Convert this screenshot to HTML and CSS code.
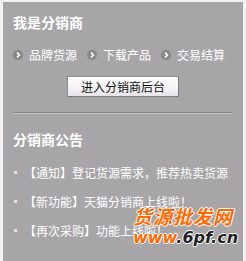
FILE: index.html
```html
<!DOCTYPE html>
<html>
<head>
<meta charset="utf-8">
<link rel="stylesheet" href="styles.css">
</head>
<body>
<div class="panel">
  <h2 class="title">我是分销商</h2>
  <div class="links">
    <a class="link"><span class="ico"><svg width="10" height="10" viewBox="0 0 10 10"><circle cx="5" cy="5" r="5" fill="#89878a"/><path d="M4 2.6 L6.4 5 L4 7.4" stroke="#fff" stroke-width="1.6" fill="none"/></svg></span>品牌货源</a>
    <a class="link"><span class="ico"><svg width="10" height="10" viewBox="0 0 10 10"><circle cx="5" cy="5" r="5" fill="#89878a"/><path d="M4 2.6 L6.4 5 L4 7.4" stroke="#fff" stroke-width="1.6" fill="none"/></svg></span>下载产品</a>
    <a class="link"><span class="ico"><svg width="10" height="10" viewBox="0 0 10 10"><circle cx="5" cy="5" r="5" fill="#89878a"/><path d="M4 2.6 L6.4 5 L4 7.4" stroke="#fff" stroke-width="1.6" fill="none"/></svg></span>交易结算</a>
  </div>
  <div class="btnrow"><button class="btn">进入分销商后台</button></div>
  <div class="divider"></div>
  <h2 class="title title2">分销商公告</h2>
  <ul class="news">
    <li>【通知】登记货源需求，推荐热卖货源</li>
    <li>【新功能】天猫分销商上线啦！</li>
    <li>【再次采购】功能上线啦！</li>
  </ul>
  <div class="mark">
    <div class="mark-cn">货源批发网</div>
    <div class="mark-en"><span class="w">www</span>.6pf.cn</div>
  </div>
</div>
</body>
</html>
```
FILE: styles.css
```css
html, body {
  margin: 0;
  padding: 0;
  background: #f3f1f4;
}
body {
  font-family: "Noto Sans CJK SC", "Liberation Sans", sans-serif;
  font-size: 12px;
  color: #fff;
}
.panel {
  position: relative;
  margin: 2px 0 0 3px;
  width: 240px;
  height: 259px;
  background: #a7a5a8;
  padding: 10px 10px 0 10px;
  box-sizing: border-box;
  overflow: hidden;
}
.title {
  margin: 0;
  font-size: 14px;
  line-height: 20px;
  font-weight: bold;
  color: #fff;
}
.links {
  margin-top: 15px;
  display: flex;
  gap: 10px;
  line-height: 16px;
}
.link {
  display: flex;
  align-items: center;
  gap: 6px;
  color: #fff;
  white-space: nowrap;
}
.ico {
  display: flex;
  width: 10px;
  height: 10px;
  margin-top: -1px;
}
.btnrow {
  margin-top: 13px;
  display: flex;
  justify-content: center;
}
.btn {
  width: 112px;
  height: 21px;
  padding: 0;
  font-family: inherit;
  font-size: 12px;
  line-height: 19px;
  color: #111;
  background: linear-gradient(#ffffff, #f4f3f6 60%, #e6e4e8);
  border: 1px solid #8f8d90;
  border-right-color: #7c7a7d;
  border-bottom-color: #7c7a7d;
  border-radius: 1px;
}
.divider {
  margin-top: 15px;
  height: 0;
  border-top: 1px solid #858386;
  border-bottom: 1px solid #c9c7ca;
}
.title2 {
  margin-top: 15px;
}
.news {
  list-style: none;
  margin: 9px 0 0 0;
  padding: 0;
}
.news li {
  position: relative;
  line-height: 29px;
  padding-left: 11px;
  white-space: nowrap;
}
.news li::before {
  content: "";
  position: absolute;
  left: 1px;
  top: 13px;
  width: 3px;
  height: 3px;
  background: #e2e0e3;
}
.mark {
  position: absolute;
  left: 130px;
  top: 203px;
  width: 110px;
  pointer-events: none;
}
.mark-cn {
  font-size: 19px;
  line-height: 22px;
  font-weight: bold;
  color: #ff6a00;
  letter-spacing: 1px;
  text-shadow: 1px 0 #fff, -1px 0 #fff, 0 1px #fff, 0 -1px #fff;
  font-style: italic;
}
.mark-en {
  margin-top: 2px;
  font-family: "DejaVu Sans", sans-serif;
  font-size: 16px;
  line-height: 18px;
  font-weight: bold;
  color: #222;
  font-style: italic;
  text-shadow: 1px 0 #fff, -1px 0 #fff, 0 1px #fff, 0 -1px #fff;
}
.mark-en .w {
  color: #ff6a00;
}
```
